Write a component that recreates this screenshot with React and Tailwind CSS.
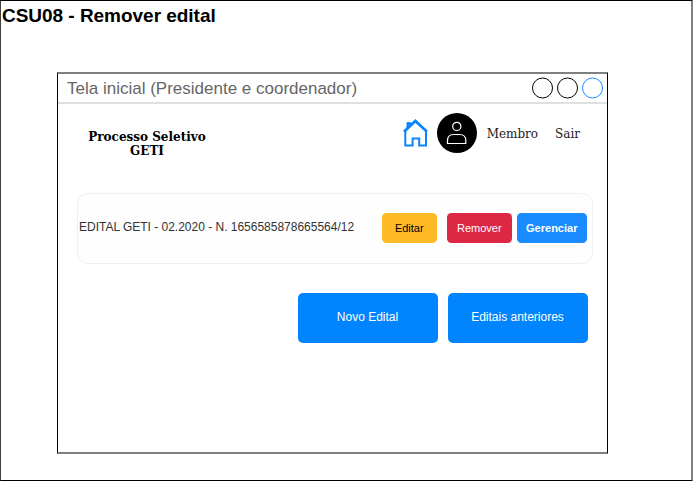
function HouseIcon() {
  return (
    <svg className="h-7 w-[26px] shrink-0" viewBox="0 0 26 28" fill="none">
      <path
        d="M12.4 2.4 L23 12 V26.6 H16.2 V19.4 H9.6 V26.6 H2.3 V12 Z"
        stroke="#0a84ff"
        strokeWidth="2"
      />
      <path d="M0.9 12.6 L12.4 1.8 L24 12.6" stroke="#0a84ff" strokeWidth="2.6" />
      <path d="M4 8.8 V3.6 H7.4 V5.6 Z" fill="#0a84ff" stroke="#0a84ff" strokeWidth="1" />
    </svg>
  );
}

function Avatar() {
  return (
    <svg className="size-10 shrink-0" viewBox="0 0 40 40" fill="none">
      <circle cx="20" cy="20" r="20" fill="#000" />
      <circle cx="19.8" cy="13.4" r="4.1" stroke="#fff" strokeWidth="1.2" />
      <path
        d="M10.5 30.5 V27.5 C10.5 23.4 13.5 21.5 17 21.5 H22.5 C26 21.5 28.8 23.4 28.8 27.5 V30.5 Z"
        stroke="#fff"
        strokeWidth="1.2"
      />
    </svg>
  );
}

function WindowDot({ color }) {
  return (
    <svg className="size-[21px] overflow-visible" viewBox="0 0 21 21" fill="none">
      <circle cx="10.5" cy="10" r="10" stroke={color} />
    </svg>
  );
}

export default function App() {
  return (
    <div className="h-[482px] w-[693px] bg-white font-['Liberation_Sans',sans-serif]">
      <div className="h-[481px] border-y border-r-2 border-l border-y-black border-r-[#808080] border-l-[#404040]">
        <h1 className="ml-px h-[71px] pt-1 text-[19px] leading-[22px] font-bold tracking-[-0.03px] whitespace-nowrap text-black">
          CSU08 - Remover edital
        </h1>

        <div className="ml-14 h-[382px] w-[551px] border-x border-y-2 border-x-black border-y-[#808080]">
          <header className="flex h-[30px] items-center justify-between border-b-2 border-[#e0e0e0] pr-[4px] pl-[9px]">
            <span className="mt-px text-[17px] leading-5 whitespace-nowrap text-[#666666]">
              Tela inicial (Presidente e coordenador)
            </span>
            <div className="flex gap-1">
              <WindowDot color="#000000" />
              <WindowDot color="#000000" />
              <WindowDot color="#1a8cff" />
            </div>
          </header>

          <nav className="flex h-[89px] items-start justify-between pt-[9px] pr-[27px] pl-[30px] font-['DejaVu_Serif',serif] text-[12px]">
            <div className="mt-[17px] w-[118px] text-center leading-[14px] font-bold whitespace-nowrap text-black">
              Processo Seletivo
              <br />
              GETI
            </div>
            <div className="flex h-10 items-center text-[#1a1a1a]">
              <HouseIcon />
              <div className="mr-px ml-2">
                <Avatar />
              </div>
              <span className="mt-0.5 ml-[9px]">Membro</span>
              <span className="mt-0.5 ml-[17px]">Sair</span>
            </div>
          </nav>

          <main className="pr-[14px] pl-[19px]">
            <section className="flex h-[71px] items-center rounded-[11px] border border-[#f0f0f0] bg-[#fefefe] pr-[5px] pb-px pl-px text-[11px]">
              <span className="mb-0.5 grow text-[12px] tracking-[-0.01px] whitespace-nowrap text-[#333333]">
                EDITAL GETI - 02.2020 - N. 1656585878665564/12
              </span>
              <button className="h-[30px] w-[55.5px] rounded-[4.5px] bg-[#ffba26] text-black">Editar</button>
              <button className="ml-[9.5px] h-[30px] w-[65.5px] rounded-[4.5px] bg-[#dc2845] text-white">
                Remover
              </button>
              <button className="ml-[4.5px] h-[30px] w-[70.5px] rounded-[4.5px] bg-[#1a8cff] font-bold text-white">
                Gerenciar
              </button>
            </section>

            <div className="mt-[29px] flex justify-end gap-[10px] pr-[5.5px] text-[12px] text-white">
              <button className="h-[50px] w-[140px] rounded-[5px] bg-[#0085ff] pb-0.5">Novo Edital</button>
              <button className="h-[50px] w-[140px] rounded-[5px] bg-[#0085ff] pb-0.5">
                Editais anteriores
              </button>
            </div>
          </main>
        </div>
      </div>
    </div>
  );
}
